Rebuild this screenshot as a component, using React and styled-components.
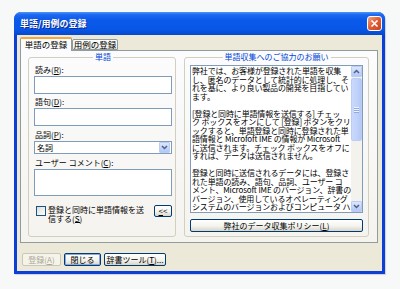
import styled, { createGlobalStyle } from "styled-components";

const GlobalStyle = createGlobalStyle`
  html, body { margin: 0; padding: 0; }
  body {
    background: #f6f9f7;
    font-family: "Noto Sans CJK JP", "Noto Sans", sans-serif;
    font-size: 8px;
    color: #000;
  }
`;

const Screen = styled.div`
  width: 400px;
  height: 289px;
  padding: 12px 0 0 14px;
  box-sizing: border-box;
`;

const Window = styled.div`
  width: 371px;
  height: 262px;
  display: flex;
  flex-direction: column;
  background: #0b3fd8;
  border-radius: 7px 7px 0 0;
  overflow: hidden;
  box-shadow: 1px 1px 1px rgba(0, 0, 0, 0.15);
`;

const TitleBar = styled.div`
  flex: none;
  height: 23px;
  display: flex;
  align-items: center;
  justify-content: space-between;
  padding: 0 3px 0 6px;
  background: linear-gradient(#4d97fa 0%, #1c68f1 12%, #0b59ea 35%, #0957e6 75%, #0648cf 100%);
`;

const Title = styled.span`
  color: #fff;
  font-size: 9px;
  font-weight: bold;
  line-height: 12px;
  text-shadow: 1px 1px 0 #0c2b94;
`;

const CloseButton = styled.div`
  width: 15px;
  height: 15px;
  box-sizing: border-box;
  border: 1px solid #fff;
  border-radius: 3px;
  background: linear-gradient(135deg, #f2a582 0%, #e2603a 45%, #c6431a 100%);
  display: flex;
  align-items: center;
  justify-content: center;
`;

const Frame = styled.div`
  flex: 1;
  margin: 0 3px 3px;
  background: #ece9d8;
  display: flex;
  flex-direction: column;
  padding: 2px 4px 0 3px;
`;

const TabStrip = styled.div`
  height: 13px;
  display: flex;
  align-items: flex-end;
  position: relative;
  z-index: 1;
`;

const Tab = styled.div`
  box-sizing: border-box;
  width: ${(p) => p.$width}px;
  height: ${(p) => (p.$active ? 14 : 11)}px;
  margin-bottom: ${(p) => (p.$active ? -1 : 0)}px;
  border: 1px solid #919b9c;
  border-top: ${(p) => (p.$active ? "2px solid #f5a93a" : "1px solid #919b9c")};
  border-bottom: ${(p) => (p.$active ? "none" : "1px solid #919b9c")};
  border-radius: 2px 2px 0 0;
  background: ${(p) => (p.$active ? "#fcfcfe" : "linear-gradient(#ffffff, #ecebe5)")};
  font-size: 8.5px;
  line-height: ${(p) => (p.$active ? 10 : 9)}px;
  text-align: center;
  white-space: nowrap;
  overflow: hidden;
`;

const Panel = styled.div`
  box-sizing: border-box;
  height: 193px;
  border: 1px solid #919b9c;
  background: linear-gradient(#fcfcfe, #f4f3ee);
  display: flex;
  gap: 8px;
  padding: 1px 8px 5px 7px;
`;

const Group = styled.fieldset`
  box-sizing: border-box;
  margin: 0;
  min-width: 0;
  width: ${(p) => p.$width}px;
  border: 1px solid #d0d0bf;
  border-radius: 3px;
  padding: 3px ${(p) => p.$padRight}px 0 5px;
`;

const Legend = styled.legend`
  margin: 0 auto;
  padding: 0 2px;
  color: #0046d5;
  font-size: 8px;
  line-height: 10px;
`;

const Stack = styled.div`
  display: flex;
  flex-direction: column;
`;

const Field = styled.div`
  display: flex;
  flex-direction: column;
  gap: 1px;
  margin-bottom: ${(p) => p.$after || 0}px;
`;

const Label = styled.div`
  height: 10px;
  line-height: 10px;
  padding-left: 1px;
  white-space: nowrap;
`;

const TextInput = styled.div`
  box-sizing: border-box;
  height: ${(p) => p.$height}px;
  border: 1px solid #7f9db9;
  background: #fff;
`;

const Select = styled.div`
  box-sizing: border-box;
  height: 13px;
  display: flex;
  align-items: center;
  padding: 0 1px 0 2px;
  border: 1px solid #7f9db9;
  background: #fff;
`;

const SelectText = styled.span`
  flex: 1;
  line-height: 10px;
`;

const ArrowButton = styled.div`
  box-sizing: border-box;
  width: 11px;
  height: ${(p) => p.$height || 11}px;
  display: flex;
  align-items: center;
  justify-content: center;
  border: 1px solid #bccdf5;
  border-radius: 1px;
  background: linear-gradient(#dde6fd, #c2d3fb 60%, #b3c7f6);
`;

const CheckRow = styled.div`
  display: flex;
  align-items: flex-start;
  margin-top: 9px;
  padding-left: 2px;
`;

const CheckBox = styled.div`
  box-sizing: border-box;
  flex: none;
  width: 10px;
  height: 10px;
  margin-top: 1px;
  border: 1px solid #1c5180;
  background: linear-gradient(135deg, #dcdcd7, #ffffff);
`;

/* one text node for both lines; the access-key underline under "S" is drawn */
const CheckText = styled.div`
  position: relative;
  flex: 1;
  margin-left: 2px;
  line-height: 9px;
  white-space: pre;

  &::after {
    content: "";
    position: absolute;
    left: 27px;
    top: 17px;
    width: 5px;
    height: 1px;
    background: #000;
  }
`;

const Button = styled.button`
  box-sizing: border-box;
  width: ${(p) => (p.$width ? `${p.$width}px` : "100%")};
  height: ${(p) => p.$height || 13}px;
  margin: 0;
  padding: 0;
  border: 1px solid ${(p) => (p.disabled ? "#c9c7ba" : "#003c74")};
  border-radius: 2px;
  background: ${(p) =>
    p.disabled ? "#f5f4ea" : "linear-gradient(#ffffff 0%, #f4f3ee 55%, #d9d5c6 100%)"};
  box-shadow: ${(p) => (p.$default ? "inset 0 0 0 1px #8ca9e4" : "none")};
  color: ${(p) => (p.disabled ? "#aca899" : "#000")};
  font-family: inherit;
  font-size: 8px;
  line-height: 10px;
  white-space: nowrap;
`;

const InfoBox = styled.div`
  box-sizing: border-box;
  height: 148px;
  display: flex;
  border: 1px solid #7f9db9;
  background: #fff;
`;

const InfoText = styled.div`
  flex: 1;
  overflow: hidden;
  padding: 1px 0 0 1px;
  font-size: 8px;
  line-height: 8.5px;
  letter-spacing: -0.15px;
  white-space: pre;
`;

const ScrollBar = styled.div`
  flex: none;
  width: 11px;
  display: flex;
  flex-direction: column;
  background: #f3f2ec;
`;

const Track = styled.div`
  flex: 1;
  padding: 1px 0;
  display: flex;
  flex-direction: column;
`;

const Thumb = styled.div`
  box-sizing: border-box;
  height: 63px;
  display: flex;
  flex-direction: column;
  align-items: center;
  justify-content: center;
  gap: 1px;
  border: 1px solid #bccdf5;
  border-radius: 2px;
  background: linear-gradient(90deg, #c9d8fc, #bfd1fa 60%, #b4c8f6);
`;

const Grip = styled.div`
  width: 5px;
  height: 1px;
  background: #eef3fe;
  box-shadow: 0 1px 0 #8faae0;
`;

const PolicyRow = styled.div`
  margin-top: 6px;
`;

const Footer = styled.div`
  display: flex;
  gap: 3px;
  padding: 10px 0 0 2px;
`;

const Chevron = ({ up }) => (
  <svg width="7" height="5" viewBox="0 0 7 5">
    <polyline
      points={up ? "1,4 3.5,1.5 6,4" : "1,1 3.5,3.5 6,1"}
      fill="none"
      stroke="#4d6185"
      strokeWidth="1.5"
    />
  </svg>
);

const infoLines = [
  "弊社では、お客様が登録された単語を収集",
  "し、匿名のデータとして統計的に処理し、そ",
  "れを基に、より良い製品の開発を目指してい",
  "ます。",
  "",
  "[登録と同時に単語情報を送信する] チェッ",
  "ク ボックスをオンにして [登録] ボタンをクリ",
  "ックすると、単語登録と同時に登録された単",
  "語情報と Microfoft IME の情報が Microsoft",
  "に送信されます。チェック ボックスをオフに",
  "すれば、データは送信されません。",
  "",
  "登録と同時に送信されるデータには、登録さ",
  "れた単語の読み、語句、品詞、ユーザー コ",
  "メント、Microsoft IME のバージョン、辞書の",
  "バージョン、使用しているオペレーティング",
  "システムのバージョンおよびコンピュータ ハ",
];

export default function App() {
  return (
    <>
      <GlobalStyle />
      <Screen>
        <Window>
          <TitleBar>
            <Title>単語/用例の登録</Title>
            <CloseButton>
              <svg width="9" height="9" viewBox="0 0 9 9">
                <path d="M1.5 1.5 L7.5 7.5 M7.5 1.5 L1.5 7.5" stroke="#fff" strokeWidth="1.6" />
              </svg>
            </CloseButton>
          </TitleBar>
          <Frame>
            <TabStrip>
              <Tab $active $width={52}>単語の登録</Tab>
              <Tab $width={46}>用例の登録</Tab>
            </TabStrip>
            <Panel>
              <Group $width={148} $padRight={3}>
                <Legend>単語</Legend>
                <Stack>
                  <Field $after={3}>
                    <Label>
                      読み(<u>R</u>):
                    </Label>
                    <TextInput $height={18} />
                  </Field>
                  <Field $after={4}>
                    <Label>
                      語句(<u>D</u>):
                    </Label>
                    <TextInput $height={18} />
                  </Field>
                  <Field $after={4}>
                    <Label>
                      品詞(<u>P</u>):
                    </Label>
                    <Select>
                      <SelectText>名詞</SelectText>
                      <ArrowButton $height={11}>
                        <Chevron />
                      </ArrowButton>
                    </Select>
                  </Field>
                  <Field>
                    <Label>
                      ユーザー コメント(<u>C</u>):
                    </Label>
                    <TextInput $height={27} />
                  </Field>
                  <CheckRow>
                    <CheckBox />
                    <CheckText>{"登録と同時に単語情報を送\n信する(S)"}</CheckText>
                    <Button $width={18} $height={12}>
                      <u>&lt;</u>&lt;
                    </Button>
                  </CheckRow>
                </Stack>
              </Group>
              <Group $width={185} $padRight={5}>
                <Legend>単語収集へのご協力のお願い</Legend>
                <InfoBox>
                  <InfoText>{infoLines.join("\n")}</InfoText>
                  <ScrollBar>
                    <ArrowButton>
                      <Chevron up />
                    </ArrowButton>
                    <Track>
                      <Thumb>
                        <Grip />
                        <Grip />
                        <Grip />
                      </Thumb>
                    </Track>
                    <ArrowButton>
                      <Chevron />
                    </ArrowButton>
                  </ScrollBar>
                </InfoBox>
                <PolicyRow>
                  <Button>
                    弊社のデータ収集ポリシー(<u>L</u>)
                  </Button>
                </PolicyRow>
              </Group>
            </Panel>
            <Footer>
              <Button disabled $width={39}>
                登録(<u>A</u>)
              </Button>
              <Button $default $width={37}>
                閉じる
              </Button>
              <Button $width={62}>
                辞書ツール(<u>T</u>)...
              </Button>
            </Footer>
          </Frame>
        </Window>
      </Screen>
    </>
  );
}
